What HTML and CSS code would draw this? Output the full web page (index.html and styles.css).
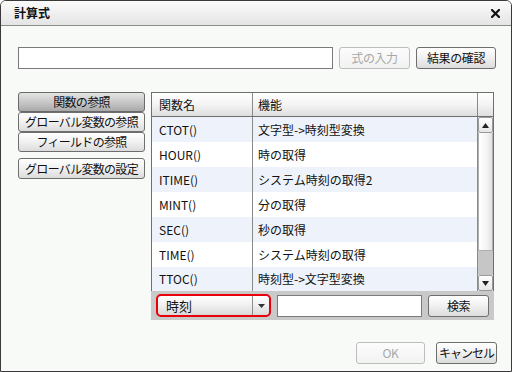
FILE: index.html
```html
<!DOCTYPE html>
<html lang="ja">
<head>
<meta charset="utf-8">
<link rel="stylesheet" href="styles.css">
</head>
<body>
<div class="dialog">
  <div class="titlebar">
    <span class="title">計算式</span>
    <svg class="close" width="9" height="9" viewBox="0 0 9 9"><path d="M1 1L8 8M8 1L1 8" stroke="#111" stroke-width="2.2" stroke-linecap="square"/></svg>
  </div>
  <div class="content">
    <div class="formula-row">
      <input class="formula" type="text">
      <button class="btn disabled w-input">式の入力</button>
      <button class="btn w-check">結果の確認</button>
    </div>
    <div class="main">
      <div class="side">
        <button class="btn side-btn pressed">関数の参照</button>
        <button class="btn side-btn">グローバル変数の参照</button>
        <button class="btn side-btn">フィールドの参照</button>
        <button class="btn side-btn set">グローバル変数の設定</button>
      </div>
      <div class="panel">
        <div class="thead">
          <div class="th c1">関数名</div>
          <div class="th c2">機能</div>
          <div class="th c3"></div>
        </div>
        <div class="tbody">
          <div class="rows">
            <div class="row alt"><div class="td c1">CTOT()</div><div class="td c2">文字型-&gt;時刻型変換</div></div>
            <div class="row"><div class="td c1">HOUR()</div><div class="td c2">時の取得</div></div>
            <div class="row alt"><div class="td c1">ITIME()</div><div class="td c2">システム時刻の取得2</div></div>
            <div class="row"><div class="td c1">MINT()</div><div class="td c2">分の取得</div></div>
            <div class="row alt"><div class="td c1">SEC()</div><div class="td c2">秒の取得</div></div>
            <div class="row"><div class="td c1">TIME()</div><div class="td c2">システム時刻の取得</div></div>
            <div class="row alt"><div class="td c1">TTOC()</div><div class="td c2">時刻型-&gt;文字型変換</div></div>
          </div>
          <div class="scrollbar">
            <div class="sb-btn"><svg width="7" height="5" viewBox="0 0 7 5"><path d="M3.5 0L7 5H0Z" fill="#222"/></svg></div>
            <div class="sb-thumb"></div>
            <div class="sb-track"></div>
            <div class="sb-btn"><svg width="7" height="5" viewBox="0 0 7 5"><path d="M0 0H7L3.5 5Z" fill="#222"/></svg></div>
          </div>
        </div>
        <div class="tfoot">
          <div class="select">
            <span class="sel-text">時刻</span>
            <span class="sel-arrow"><svg width="7" height="4" viewBox="0 0 7 4"><path d="M0 0H7L3.5 4Z" fill="#333"/></svg></span>
          </div>
          <input class="search" type="text">
          <button class="btn w-search">検索</button>
        </div>
      </div>
    </div>
    <div class="actions">
      <button class="btn disabled w-ok">OK</button>
      <button class="btn w-cancel">キャンセル</button>
    </div>
  </div>
</div>
</body>
</html>
```
FILE: styles.css
```css
* { box-sizing: border-box; }
html, body { margin: 0; padding: 0; background: #ffffff; }
body { font-family: "Noto Sans CJK JP", "Noto Sans", sans-serif; font-size: 12px; color: #111; }

.dialog {
  width: 512px; height: 372px;
  border: 1px solid #3a3a3a;
  border-radius: 6px 6px 0 0;
  background: #f8faf8;
  overflow: hidden;
  display: flex; flex-direction: column;
}
.titlebar {
  height: 25px; flex: none;
  border-bottom: 1px solid #8c8c8c;
  background: linear-gradient(#fbfbfb, #e4e4e4);
  display: flex; align-items: center; justify-content: space-between;
  padding: 0 11px 0 13px;
}
.title { font-weight: bold; font-size: 12px; line-height: 14px; }
.close { display: block; }

.content { padding: 21px 0 0 17px; display: flex; flex-direction: column; flex: 1; }

.formula-row { display: flex; height: 22px; align-items: stretch; }
.formula {
  width: 315px; height: 22px; margin: 0;
  border: 1px solid #7a7a7a; background: #fff; padding: 0 4px;
}
.btn {
  font-family: inherit; font-size: 12px; color: #111;
  border: 1px solid #6e6e6e; border-radius: 3px;
  background: linear-gradient(#ffffff, #f2f2f2 45%, #dcdcdc);
  padding: 0; margin: 0; line-height: 14px;
  white-space: nowrap; letter-spacing: -0.4px;
  display: flex; align-items: center; justify-content: center;
}
.btn.disabled { color: #a8a8a8; border-color: #bdbdbd; background: linear-gradient(#fcfcfc, #f2f2f2); }
.w-input { width: 71px; margin-left: 6px; }
.w-check { width: 80px; margin-left: 6px; }

.main { display: flex; margin-top: 23px; }
.side { width: 127px; display: flex; flex-direction: column; }
.side-btn { height: 20px; width: 127px; letter-spacing: -0.7px; }
.side-btn.pressed { background: linear-gradient(#e4e4e4, #c8c8c8 50%, #a9a9a9); border-color: #6a6a6a; }
.side-btn.set { margin-top: 6px; height: 21px; }

.panel { margin-left: 6px; width: 343px; display: flex; flex-direction: column; }
.thead {
  display: flex; height: 25px;
  border: 1px solid #6f6f6f;
  background: linear-gradient(#ffffff, #f4f4f4 50%, #dedede);
}
.th { display: flex; align-items: center; line-height: 14px; }
.c1 { width: 101px; padding-left: 7px; border-right: 1px solid #8a8a8a; flex: none; }
.c2 { flex: 1; padding-left: 5px; }
.thead .c2 { border-right: 1px solid #8a8a8a; }
.c3 { width: 15px; flex: none; }

.tbody { display: flex; height: 174px; border-left: 1px solid #6f6f6f; border-right: 1px solid #6f6f6f; }
.rows { flex: 1; display: flex; flex-direction: column; }
.row { height: 25px; display: flex; background: #ffffff; flex: none; }
.row:last-child { height: 24px; }
.row.alt { background: #eef3fb; }
.td { display: flex; align-items: center; line-height: 14px; }

.scrollbar {
  width: 16px; flex: none;
  border-left: 1px solid #8a8a8a;
  display: flex; flex-direction: column;
  background: #f7f7f7;
}
.sb-btn {
  height: 16px; flex: none;
  border: 1px solid #9a9a9a; border-radius: 2px;
  background: linear-gradient(#ffffff, #e6e6e6);
  display: flex; align-items: center; justify-content: center;
}
.sb-thumb {
  height: 118px; flex: none;
  border: 1px solid #b0b0b0; border-top: 0;
  background: linear-gradient(90deg, #ffffff, #f4f4f4 60%, #e2e2e2);
}
.sb-track { flex: 1; background: #c6c6c6; }

.tfoot {
  height: 29px; background: #c9c9c9;
  display: flex; align-items: center;
  padding: 0 5px 0 5px;
}
.select {
  width: 115px; height: 23px;
  border: 2px solid #e8000b; border-radius: 5px;
  background: linear-gradient(#ffffff, #f0f0f0 50%, #d8d8d8);
  display: flex; align-items: stretch;
}
.sel-text { flex: 1; display: flex; align-items: center; padding-left: 8px; font-size: 13px; line-height: 14px; }
.sel-arrow { width: 17px; border-left: 1px solid #8c8c8c; display: flex; align-items: center; justify-content: center; }
.search {
  width: 145px; height: 22px; margin: 0 0 0 6px;
  border: 1px solid #7a7a7a; background: #fff;
}
.w-search { width: 61px; height: 22px; margin-left: 6px; }

.actions { display: flex; justify-content: flex-end; padding-right: 14px; margin-top: 22px; }
.w-ok { width: 69px; height: 22px; }
.w-cancel { width: 61px; height: 22px; margin-left: 11px; letter-spacing: -1px; }
```
